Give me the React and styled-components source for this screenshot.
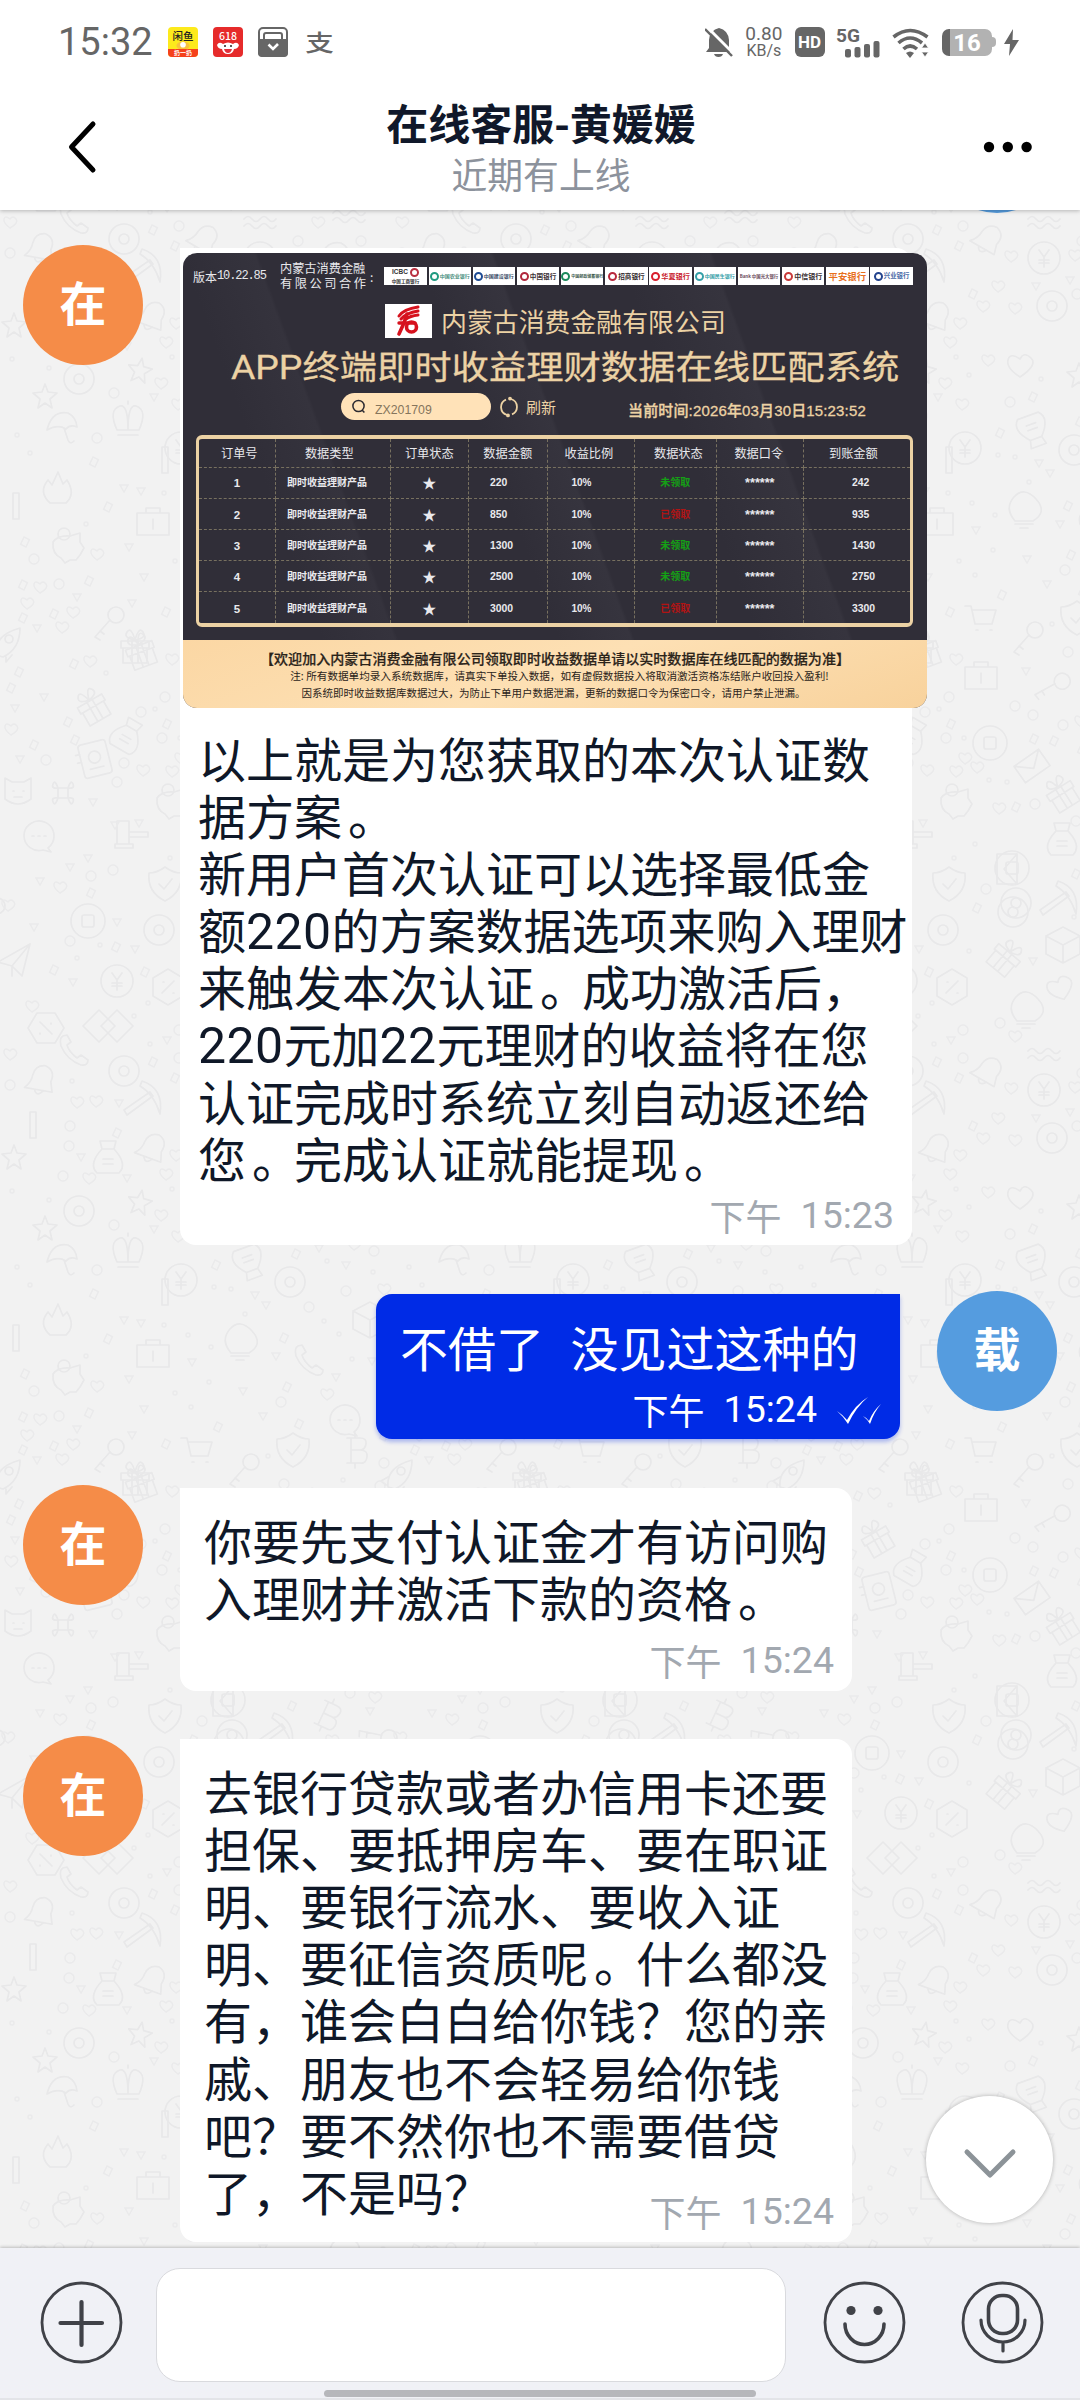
import React from "react";
import styled, { createGlobalStyle, css } from "styled-components";

const cjk = '"Noto Sans CJK SC", sans-serif';
const latinCjk = 'Roboto, "Noto Sans CJK SC", sans-serif';

const GlobalStyle = createGlobalStyle`
  * { box-sizing: border-box; }
  body { margin: 0; background: #fff; font-family: ${cjk}; text-spacing-trim: space-all; }
`;

const Screen = styled.div`
  width: 1080px;
  height: 2400px;
  display: flex;
  flex-direction: column;
  overflow: hidden;
  background: #fff;
`;

/* ---------- status bar ---------- */

const StatusBar = styled.div`
  height: 84px;
  flex: none;
  display: flex;
  align-items: center;
  justify-content: space-between;
  padding: 0 61px 0 58px;
  color: #666;
  font-family: ${latinCjk};
`;
const StatusGroup = styled.div`
  display: flex;
  align-items: center;
  gap: ${(p) => p.$gap || 0}px;
`;
const Clock = styled.div`
  font-size: 38px;
  line-height: 44px;
  width: 95px;
`;
const AppIcon = styled.div`
  width: 30px;
  height: 30px;
  border-radius: 4px;
  overflow: hidden;
  display: flex;
  flex-direction: column;
  align-items: center;
  background: ${(p) => p.$bg};
`;
const AppIconName = styled.div`
  font-family: ${cjk};
  font-weight: 500;
  font-size: 10.5px;
  line-height: 11px;
  margin-top: 3px;
  color: ${(p) => p.$color};
`;
const AppIconStrip = styled.div`
  margin-top: auto;
  width: 30px;
  height: 9px;
  background: #f5411c;
  color: #fff;
  font: 700 6px/8px ${cjk};
  text-align: center;
`;
const AlipayMark = styled.div`
  font: 500 27px/30px ${cjk};
  transform: scale(1.06, 0.84);
  margin-left: 3px;
`;
const NetSpeed = styled.div`
  width: 38px;
  text-align: center;
  display: flex;
  flex-direction: column;
  align-items: center;
`;
const SpeedValue = styled.div`
  font-size: 19px;
  line-height: 17px;
`;
const SpeedUnit = styled.div`
  font-size: 16px;
  line-height: 17px;
`;
const HdBadge = styled.div`
  width: 30px;
  height: 30px;
  border-radius: 6px;
  background: #666;
  color: #fff;
  font: 700 17px/31px Roboto, sans-serif;
  text-align: center;
`;
const Battery = styled.div`
  display: flex;
  align-items: center;
`;
const BatteryBody = styled.div`
  width: 50px;
  height: 27px;
  border-radius: 7px;
  background: linear-gradient(90deg, #666 8px, #b2b2b2 8px);
  color: #fff;
  font: 700 24px/28px Roboto, sans-serif;
  text-align: center;
`;
const BatteryCap = styled.div`
  width: 4px;
  height: 10px;
  border-radius: 0 4px 4px 0;
  background: #b2b2b2;
`;

/* ---------- header ---------- */

const Header = styled.header`
  height: 126px;
  flex: none;
  display: flex;
  justify-content: space-between;
  padding: 0 48px 0 62px;
  position: relative;
  z-index: 2;
  background: #fff;
  box-shadow: 0 1px 4px rgba(0, 0, 0, 0.25);
  clip-path: inset(0 0 -10px 0);
`;
const HeaderSide = styled.div`
  width: 120px;
  display: flex;
  padding-top: 34px;
  justify-content: ${(p) => (p.$end ? "flex-end" : "flex-start")};
`;
const HeaderText = styled.div`
  display: flex;
  flex-direction: column;
  align-items: center;
  margin-left: -12px;
`;
const Title = styled.div`
  font: 700 42px/52px ${cjk};
  color: #10182a;
  margin-top: 12px;
`;
const Subtitle = styled.div`
  font: 400 35.8px/44px ${cjk};
  color: #8c929c;
  margin-top: 3px;
`;

/* ---------- chat ---------- */

const Chat = styled.main`
  flex: 1;
  position: relative;
  overflow: hidden;
  background: #f2f2f2;
`;
const Wallpaper = styled.svg`
  position: absolute;
  left: 0;
  top: 0;
`;
const MessageList = styled.div`
  position: relative;
  display: flex;
  flex-direction: column;
  margin-top: -117px;
`;
const Row = styled.div`
  display: flex;
  align-items: flex-start;
  padding: 0 23px;
  margin-top: ${(p) => (p.$gap == null ? 46 : p.$gap)}px;
  justify-content: ${(p) => (p.$mine ? "flex-end" : "flex-start")};
  gap: 37px;
`;
const Avatar = styled.div`
  width: 120px;
  height: 120px;
  flex: none;
  border-radius: 50%;
  background: ${(p) => (p.$mine ? "#559cdf" : "#f58c48")};
  color: #fff;
  font: 700 47px/112px ${cjk};
  text-align: center;
`;
const Bubble = styled.div`
  display: flex;
  flex-direction: column;
  margin-top: 3px;
  width: ${(p) => p.$w}px;
  font-family: ${latinCjk};
  ${(p) =>
    p.$mine
      ? css`
          background: #002be6;
          color: #fff;
          border-radius: 16px 0 16px 16px;
          box-shadow: 0 3px 4px rgba(0, 43, 230, 0.3);
          padding: 28px 18px 9px 24px;
        `
      : css`
          background: #fff;
          color: #0f1828;
          border-radius: 0 16px 16px 16px;
          padding: ${p.$media ? "5px 18px 9px 18px" : "27px 18px 10px 24px"};
        `}
`;
const Lines = styled.div`
  display: flex;
  flex-direction: column;
  margin-top: ${(p) => p.$top || 0}px;
`;
const Line = styled.div`
  font-size: 48px;
  line-height: 57px;
  height: 57.1px;
  white-space: pre;
  word-spacing: 1.4px;
`;
const Digits = styled.span`
  font-size: 50px;
  line-height: 1;
  letter-spacing: 0.4px;
`;
const FullStop = styled.span`
  display: inline-block;
  width: 48px;
  height: 57px;
  text-indent: 6px;
  vertical-align: top;
`;
const Meta = styled.div`
  display: flex;
  align-items: center;
  justify-content: flex-end;
  gap: 19px;
  height: 42px;
  margin-top: ${(p) => p.$top}px;
  color: ${(p) => (p.$mine ? "#fff" : "#a2a8b0")};
`;
const Period = styled.span`
  font: 400 36px/42px ${cjk};
`;
const Time = styled.span`
  font: 400 37.5px/42px Roboto, sans-serif;
`;
const Ticks = styled.svg`
  margin-top: 5px;
`;

/* ---------- picture card ---------- */

const Card = styled.div`
  width: 744px;
  height: 455px;
  margin-left: -15px;
  border-radius: 14px;
  overflow: hidden;
  display: flex;
  flex-direction: column;
  background: linear-gradient(
    70deg,
    #302e38 0%,
    #302e38 18%,
    #35333d 26%,
    #302e38 26.4%,
    #302e38 44%,
    #36343e 52%,
    #302e38 52.4%,
    #302e38 66%,
    #36343e 76%,
    #302e38 76.4%
  );
`;
const PartnerBar = styled.div`
  height: 46px;
  display: flex;
  align-items: center;
  padding-left: 10px;
  color: #e8e8ec;
  font: 400 12px/15px ${cjk};
`;
const Version = styled.div`
  width: 87px;
  white-space: nowrap;
  display: flex;
  align-items: center;
`;
const VersionNumber = styled.span`
  font: 400 12px/15px "Liberation Mono", monospace;
  letter-spacing: -1.1px;
`;
const Partner = styled.div`
  width: 90px;
  display: flex;
  flex-direction: column;
  font-size: 12.2px;
  white-space: nowrap;
`;
const Spread = styled.div`
  display: flex;
  justify-content: space-between;
  width: 86px;
`;
const Banks = styled.div`
  display: flex;
  gap: 1.9px;
  margin-left: 11px;
`;
const Bank = styled.div`
  width: 42.3px;
  height: 18.5px;
  background: #fff;
  display: flex;
  align-items: center;
  justify-content: center;
  gap: 1px;
  white-space: nowrap;
  overflow: hidden;
  color: ${(p) => p.$color};
  font: 700 ${(p) => p.$size}px/8px ${cjk};
`;
const BankDot = styled.i`
  flex: none;
  width: 9px;
  height: 9px;
  border-radius: 50%;
  border: 2px solid ${(p) => p.$color};
`;
const BankStack = styled.div`
  display: flex;
  flex-direction: column;
  align-items: center;
`;
const BankTop = styled.div`
  display: flex;
  align-items: center;
  gap: 2px;
  font: 700 6.5px/8px "Liberation Sans", sans-serif;
`;

const Company = styled.div`
  display: flex;
  align-items: center;
  margin: 5px 0 0 202px;
  height: 34px;
  gap: 9px;
  color: #ecd2a4;
  font: 400 25.9px/34px ${cjk};
`;
const CompanyLogo = styled.div`
  width: 47px;
  height: 34px;
  background: #fff;
  display: flex;
  justify-content: center;
`;
const SystemName = styled.div`
  height: 40px;
  margin: 10px 0 0 48px;
  color: #ecd2a4;
  font: 400 33.2px/40px ${latinCjk};
  -webkit-text-stroke: 0.3px #ecd2a4;
  white-space: nowrap;
  transform: scaleX(1.124);
  transform-origin: left center;
`;
const Tools = styled.div`
  display: flex;
  align-items: center;
  height: 27px;
  margin: 5px 0 0 158px;
`;
const SearchPill = styled.div`
  display: flex;
  align-items: center;
  gap: 9px;
  width: 150px;
  height: 27px;
  padding-left: 10px;
  border-radius: 14px;
  background: #ffe2b8;
  color: #85755c;
`;
const SearchText = styled.span`
  font: 400 12.3px/20px "Liberation Sans", sans-serif;
  padding-top: 7px;
`;
const Refresh = styled.div`
  display: flex;
  align-items: center;
  gap: 7px;
  width: 129px;
  margin-left: 8px;
  color: #ecd2a4;
  font: 400 15px/27px ${cjk};
`;
const Now = styled.div`
  color: #ecd2a4;
  font: 500 15px/20px "Liberation Sans", ${cjk};
  margin-top: 8px;
  white-space: nowrap;
  letter-spacing: 0.15px;
  -webkit-text-stroke: 0.3px #ecd2a4;
`;
const Table = styled.div`
  flex: none;
  margin: 15px 0 0 13px;
  width: 717px;
  height: 192px;
  border: solid #ecd2a4;
  border-width: 4px 3px;
  border-radius: 6px;
  display: grid;
  grid-template-columns: 77px 114.6px 78.4px 79.5px 86.5px 81.7px 87.3px 1fr;
  grid-template-rows: 28.8px repeat(4, 31.1px) 1fr;
`;
const Cell = styled.div`
  display: flex;
  align-items: center;
  justify-content: ${(p) => (p.$left ? "flex-start" : "center")};
  padding-left: ${(p) => p.$left || 0}px;
  padding-right: ${(p) => p.$right || 0}px;
  padding-top: ${(p) => p.$drop || 0}px;
  border: 0 dashed #77705f;
  border-right-width: ${(p) => (p.$last ? 0 : 1)}px;
  border-bottom-width: ${(p) => (p.$end ? 0 : 1)}px;
  color: ${(p) => p.$color || "#e9e9ed"};
  font: ${(p) => (p.$head ? 400 : 700)} ${(p) => p.$size || 10}px/14px "Liberation Sans", ${cjk};
  white-space: nowrap;
`;
const CardFooter = styled.div`
  margin-top: 13px;
  flex: 1;
  display: flex;
  flex-direction: column;
  align-items: center;
  padding: 9px 0 0 0;
  background: linear-gradient(160deg, #fbd7a4, #fde0b4 50%, #f8d29c);
  color: #2b241a;
`;
const Welcome = styled.div`
  font: 500 14.06px/18px ${cjk};
  -webkit-text-stroke: 0.2px #2b241a;
  white-space: nowrap;
`;
const Note = styled.div`
  font: 400 ${(p) => p.$size}px/17.4px ${cjk};
  margin-left: ${(p) => p.$shift}px;
  white-space: nowrap;
`;

/* ---------- floating button and composer ---------- */

const ScrollDown = styled.button`
  position: absolute;
  right: 27px;
  bottom: 25px;
  width: 127px;
  height: 127px;
  border: 0;
  border-radius: 50%;
  background: #fff;
  box-shadow: 0 0 4px rgba(0, 0, 0, 0.28);
  display: flex;
  align-items: center;
  justify-content: center;
  padding: 8px 0 0;
`;
const Composer = styled.footer`
  flex: none;
  height: 152px;
  background: #f0f1f6;
  border-bottom: 2px solid #e3e4e8;
  box-shadow: 0 -1px 3px rgba(0, 0, 0, 0.22);
  position: relative;
  display: flex;
  flex-direction: column;
`;
const ComposerRow = styled.div`
  display: flex;
  padding: 20px 36px 0 40px;
`;
const RoundIcon = styled.svg`
  flex: none;
  width: 83px;
  height: 83px;
  margin-top: 13px;
  margin-left: ${(p) => p.$ml || 0}px;
  fill: none;
  stroke: #404248;
  stroke-linecap: round;
`;
const Field = styled.div`
  width: 630px;
  height: 114px;
  margin-left: 33px;
  border: 1px solid #d9dade;
  border-radius: 24px;
  background: #fff;
`;
const HomeBar = styled.div`
  width: 432px;
  height: 7px;
  border-radius: 4px;
  background: #b6b7bb;
  align-self: center;
  margin-top: 8px;
`;

/* ---------- wallpaper drawings ---------- */

const shapes = {
  coin: <><circle r="15" /><circle r="5" /></>,
  square: <><circle r="17" /><rect x="-6" y="-6" width="12" height="12" rx="2" /></>,
  yen: <><circle r="16" /><path d="M-5-8 0-1 5-8M0-1V9M-5 2H5M-5 5H5" /></>,
  btc: <path d="M-9-12H4q7 0 6 6q-1 6-6 6H-5M4 0q8 0 7 7t-7 6H-9M-5-12V13M-1-17V-12M-1 13V18" />,
  gift: <path d="M-14-7H14V0H-14ZM-12 0V15H12V0M-3-7V15M3-7V15M0-8Q-12-10-8-16T0-8Q12-10 8-16T0-8" />,
  chat: <><path d="M-15 0a15 15 0 1 1 24 12l3 4-8-2A15 15 0 0 1-15 0Z" /><path d="M-7 0h2M-1 0h2M5 0h2" /></>,
  photo: <><rect x="-14" y="-17" width="28" height="34" rx="3" /><circle cy="-2" r="6" /><path d="M-14-8h-4M-14 0h-4M-7 9H7" /></>,
  shield: <path d="M0-17Q8-11 16-11Q18 8 0 17Q-18 8-16-11Q-8-11 0-17ZM-6 0-1 5 7-5" />,
  bag: <><path d="M-6-9Q-20 6-11 15H11Q20 6 6-9ZM-6-9-8-17H8L6-9" /><path d="M-5 1H5M-5 6H5" /></>,
  gavel: <path d="M-13-14H-1V9H-13ZM-15 9H3V13H-15ZM-1-3H18V2H-1" />,
  pick: <path d="M-20 14 6-4l3 4L-17 19ZM-2-15Q20-8 16 18Q10-2-4-10Z" />,
  cube: <path d="M0-18 17-9V9L0 18-17 9V-9ZM-17-9 0 0 17-9M0 0V18" />,
  mail: <path d="M-15-10H15V10H-15ZM-15-10 0 3 15-10" />,
  heart: <path d="M0 12Q-14 3-12-5T0-6Q4-14 11-7T0 12Z" />,
  diamonds: <path d="M-9-16 7 0-9 16-25 0ZM9-16 25 0 9 16-7 0Z" />,
  bell: <path d="M-14 10Q-8 4-8-4Q-7-14 3-15Q14-12 11 0L14 10ZM-4 10Q0 18 5 10" />,
  bulb: <path d="M-9 13Q-20 0-10-11T12-9T9 13ZM-9 16H9M-4 20H4" />,
  wave: <path d="M-17-3q4-5 8 0t8 0 8 0 8 0M-17 4q4-5 8 0t8 0 8 0 8 0" />,
  hex: <path d="M0-18 15-9V9L0 18-15 9V-9ZM-6 6 6-6M-5-5h1M5 6h1" />,
  pig: <><path d="M-15-4Q-10-11 2-10L12-13V-4L16 2 12 9 8 14H2L-3 17-7 12Q-16 8-15-4Z" /><circle cx="-4" cy="-12" r="6" /></>,
  star: <path d="M0-12 3-4 12-3 5 3 7 12 0 7-7 12-5 3-12-3-3-4Z" />,
  plane: <path d="M-16 2 16-16 8 16-2 6ZM-2 6 16-16M-2 6V16" />,
  phone: <path d="M-12-14Q-16-12-14-4Q-8 10 6 15Q13 16 13 10L6 5 2 8Q-6 2-8-5L-4-8-8-15Z" />,
  crown: <path d="M-11 12Q-20-8-8-12Q0-14 0 12Q0-14 8-12Q20-8 11 12ZM-10 17H10M0-14V-17" />,
  umbrella: <path d="M-15 4Q-10-16 6-13Q14-9 15 1Q8-2 4 3Q-4-2-15 4ZM2 2 6 14q2 5 6 1" />,
  rocket: <><path d="M-10 12Q-12-8 14-15Q14 6-3 14ZM-10 2-17 6-12 10M0 14 0 19 6 12" /><circle cx="3" cy="-4" r="4" /></>,
  key: <><circle cx="8" cy="-8" r="8" /><path d="M2-3-13 14M-13 14-8 17M-8 8-4 11" /></>,
  cart: <path d="M-17-12H-11L-7 6H10L14-8H-10M-6 12h2M8 12h2" />,
  fire: <path d="M-8 15Q-20 4-10-8L-6-3 0-16 5-4 9-8Q18 6 8 15Z" />,
  box: <path d="M-16-8H16V14H-16ZM-7-8V-13H7V-8M0-2V8" />,
  bar: <rect x="-3" y="-13" width="6" height="26" />,
  cat: <path d="M-13-13-6-9H6L13-13V8Q0 18-13 8ZM-5 0h1M5 0h1M-4 6H4" />,
  cmd: <path d="M-5-5H5V5H-5ZM-5-5Q-12-4-10-9T-5-5M5-5Q12-4 10-9T5-5M5 5Q12 4 10 9T5 5M-5 5Q-12 4-10 9T-5 5" />,
};

const TILE_W = 392;
const TILE_H = 832;
const doodles = [
  ["gift", 925, 1484, -20], ["box", 981, 1507, 0], ["key", 1052, 1518, 20], ["gift", 877, 1539, -30],
  ["bag", 911, 1568, 30], ["photo", 879, 1591, -14], ["square", 990, 1575, 0], ["mail", 1032, 1598, -35],
  ["gift", 1062, 1626, -32], ["pig", 956, 1634, 0], ["gavel", 914, 1667, 0], ["bag", 1062, 1672, 0],
  ["mail", 1007, 1701, 90], ["shield", 949, 1716, 0], ["pick", 1060, 1728, 0], ["coin", 1013, 1744, 0],
  ["square", 872, 1753, 0], ["coin", 943, 1762, 0], ["cube", 1063, 1777, 0], ["gift", 1005, 1790, 40],
  ["yen", 901, 1813, 0], ["hex", 952, 1819, 0], ["heart", 1060, 1820, -20], ["diamonds", 892, 1858, 0],
  ["bulb", 1026, 1840, 0], ["wave", 1045, 1886, 0], ["coin", 908, 1903, 0], ["bell", 987, 1903, 30],
  ["pick", 928, 1928, 0], ["yen", 1044, 1922, 0], ["coin", 1052, 1970, 0], ["bell", 935, 1980, 20],
  ["cat", 18, 791, 0], ["cmd", 63, 793, 0], ["chat", 39, 836, 0], ["plane", 14, 960, 0],
  ["hex", 46, 1028, 90], ["phone", 75, 1050, 0], ["bell", 40, 1080, 10], ["bar", 33, 1125, 0],
  ["bag", 108, 1158, 0], ["star", 14, 1157, 0], ["star", 140, 1202, 10], ["coin", 79, 1211, 0],
  ["star", 45, 1228, 0], ["crown", 128, 1250, 0], ["umbrella", 62, 1258, 0], ["yen", 573, 1280, 0],
  ["fire", 58, 1320, 0], ["bag", 641, 1262, 160], ["coin", 682, 1282, 0], ["pig", 68, 1378, 0],
  ["box", 153, 1353, 0], ["bar", 165, 1292, 0], ["bar", 16, 1338, 0], ["key", 500, 1455, 0],
  ["cart", 590, 1450, 0], ["shield", 685, 1450, 0], ["btc", 748, 1450, 0], ["rocket", 398, 1475, 0],
  ["gift", 527, 1480, 0], ["key", 635, 1470, 0], ["star", 295, 1207, 0], ["heart", 236, 1197, 0],
  ["square", 228, 1700, 0], ["btc", 328, 1715, 25], ["key", 378, 1735, 60], ["coin", 232, 1735, 0],
  ["phone", 310, 1360, 0], ["chat", 345, 1420, 0], ["bulb", 240, 1340, 0], ["plane", 350, 1560, 0],
  ["crown", 340, 1620, 0], ["star", 320, 1780, 0], ["photo", 345, 1840, 12], ["umbrella", 335, 1920, 0],
  ["rocket", 340, 1980, 20], ["heart", 370, 1660, 0], ["wave", 350, 1880, 0], ["cube", 370, 1320, 0],
];

const mod = (n, m) => ((n % m) + m) % m;

const buildSpecks = (count) => {
  let seed = 20917;
  const next = () => {
    seed = (seed * 16807) % 2147483647;
    return seed / 2147483647;
  };
  const placed = doodles.map(([, x, y]) => ({ x: mod(x, TILE_W), y: mod(y, TILE_H), r: 25 }));
  const result = [];
  for (let i = 0; i < 6000 && result.length < count; i += 1) {
    const x = 7 + next() * (TILE_W - 14);
    const y = 7 + next() * (TILE_H - 14);
    if (placed.every((p) => Math.hypot(p.x - x, p.y - y) > p.r)) {
      placed.push({ x, y, r: 15 });
      result.push({ x: Math.round(x), y: Math.round(y), k: result.length % 5 });
    }
  }
  return result;
};
const specks = buildSpecks(230);

const Speck = ({ x, y, k }) => {
  const t = `translate(${x} ${y})`;
  if (k === 0) return <circle transform={t} r="5" />;
  if (k === 1) return <rect transform={`${t} rotate(25)`} x="-3" y="-4" width="6" height="8" />;
  if (k === 2) return <path transform={t} d="M-4-3H4L0 4Z" />;
  if (k === 3) return <circle transform={t} r="2" />;
  return <path transform={t} d="M0 6Q-7 1-6-3T0-3Q3-7 6-3T0 6Z" />;
};

const WallpaperPattern = () => (
  <Wallpaper width="1080" height="2040">
    <defs>
      <pattern id="doodle" width={TILE_W} height={TILE_H} patternUnits="userSpaceOnUse" patternTransform="translate(0 -210)">
        <g fill="none" stroke="#e8e8e9" strokeWidth="1.7" strokeLinejoin="round" strokeLinecap="round">
          {doodles.flatMap(([name, px, py, rot], i) => {
            const x = mod(px, TILE_W);
            const y = mod(py, TILE_H);
            const xs = x < 26 ? [x, x + TILE_W] : x > TILE_W - 26 ? [x, x - TILE_W] : [x];
            const ys = y < 26 ? [y, y + TILE_H] : y > TILE_H - 26 ? [y, y - TILE_H] : [y];
            return xs.flatMap((ax) =>
              ys.map((ay) => (
                <g key={`${i}-${ax}-${ay}`} transform={`translate(${ax} ${ay}) rotate(${rot})`}>
                  {shapes[name]}
                </g>
              ))
            );
          })}
        </g>
        <g fill="none" stroke="#eaeaeb" strokeWidth="1.5">
          {specks.map((s, i) => <Speck key={i} {...s} />)}
        </g>
      </pattern>
    </defs>
    <rect width="1080" height="2040" fill="url(#doodle)" />
  </Wallpaper>
);

/* ---------- data ---------- */

const banks = [
  { name: "中国农业银行", color: "#4a8f80", dot: "#1f9a80", size: 5 },
  { name: "中国建设银行", color: "#3a4a66", dot: "#1d4b94", size: 5 },
  { name: "中国银行", color: "#3a3034", dot: "#b0283c", size: 6.6 },
  { name: "中国邮政储蓄银行", color: "#3c5c50", dot: "#1c8a5c", size: 4 },
  { name: "招商银行", color: "#33282c", dot: "#b8283c", size: 6.6 },
  { name: "华夏银行", color: "#c8202c", dot: "#d81e2c", size: 7.2 },
  { name: "中国民生银行", color: "#35a0a8", dot: "#35a0a8", size: 5 },
  { name: "中国光大银行", color: "#6a4a5c", bank: true, size: 4.4 },
  { name: "中信银行", color: "#3a3034", dot: "#c83a3a", size: 7 },
  { name: "平安银行", color: "#e8701e", size: 9.4 },
  { name: "兴业银行", color: "#4a6aa8", dot: "#24448e", size: 6.4 },
];

const heads = [
  { label: "订单号", left: 22 },
  { label: "数据类型", right: 7 },
  { label: "订单状态" },
  { label: "数据金额", right: 1 },
  { label: "收益比例", left: 16 },
  { label: "数据状态", left: 19 },
  { label: "数据口令", right: 2 },
  { label: "到账金额", left: 25 },
];
const orders = [
  ["1", "220", "未领取", "242"],
  ["2", "850", "已领取", "935"],
  ["3", "1300", "未领取", "1430"],
  ["4", "2500", "未领取", "2750"],
  ["5", "3000", "已领取", "3300"],
];

const OrderRow = ({ order, index, end }) => {
  const [id, amount, state, total] = order;
  const common = { $end: end, $drop: index === 0 ? 0 : 2 };
  return (
    <>
      <Cell {...common} $size={11.5}>{id}</Cell>
      <Cell {...common} $left={11}>即时收益理财产品</Cell>
      <Cell {...common} $size={14}>★</Cell>
      <Cell {...common} $left={21} $size={10.4}>{amount}</Cell>
      <Cell {...common} $left={23}>10%</Cell>
      <Cell {...common} $color={state === "未领取" ? "#15a015" : "#b01414"}>{state}</Cell>
      <Cell {...common} $size={12.6}>******</Cell>
      <Cell {...common} $last $left={48} $size={10.4}>{total}</Cell>
    </>
  );
};

const PictureCard = () => (
  <Card>
    <PartnerBar>
      <Version>版本<VersionNumber>10.22.85</VersionNumber></Version>
      <Partner>
        <div>内蒙古消费金融</div>
        <Spread>{"有限公司合作".split("").map((c) => <span key={c}>{c}</span>)}</Spread>
      </Partner>
      :
      <Banks>
        <Bank $color="#333" $size={4.6}>
          <BankStack>
            <BankTop>ICBC <BankDot $color="#b83040" /></BankTop>
            中国工商银行
          </BankStack>
        </Bank>
        {banks.map((b) => (
          <Bank key={b.name} $color={b.color} $size={b.size}>
            {b.dot && <BankDot $color={b.dot} />}
            {b.bank && <span>Bank</span>}
            {b.name}
          </Bank>
        ))}
      </Banks>
    </PartnerBar>
    <Company>
      <CompanyLogo>
        <svg width="26" height="34" viewBox="0 0 26 34" fill="none" stroke="#d6121e" strokeLinecap="round">
          <path d="M3 12Q8 5 22 3M5 15Q10 9 22 7M10 15Q14 12 22 11" strokeWidth="3" />
          <path d="M11 10Q8 20 3 30" strokeWidth="3.6" />
          <path d="M3 19H19" strokeWidth="3.4" />
          <circle cx="15.5" cy="23" r="5" strokeWidth="3.6" />
        </svg>
      </CompanyLogo>
      内蒙古消费金融有限公司
    </Company>
    <SystemName>APP终端即时收益理财数据在线匹配系统</SystemName>
    <Tools>
      <SearchPill>
        <svg width="15" height="15" viewBox="0 0 15 15" fill="none" stroke="#2c2a30" strokeWidth="1.5">
          <circle cx="7.5" cy="7" r="5.6" /><path d="M11 11l2.4 2.6" />
        </svg>
        <SearchText>ZX201709</SearchText>
      </SearchPill>
      <Refresh>
        <svg width="20" height="22" viewBox="0 0 20 22" fill="none" stroke="#ecd2a4" strokeWidth="1.8">
          <path d="M12 3a8.2 8.2 0 0 1 1 15.4M8 19a8.2 8.2 0 0 1-1-15.4" />
          <circle cx="11" cy="2.6" r="1" /><circle cx="9" cy="19.4" r="1" />
        </svg>
        刷新
      </Refresh>
      <Now>当前时间:2026年03月30日15:23:52</Now>
    </Tools>
    <Table>
      {heads.map((h, i) => (
        <Cell key={h.label} $head $drop={2} $size={12.2} $last={i === heads.length - 1}
          $left={h.left} $right={h.right}>
          {h.label}
        </Cell>
      ))}
      {orders.map((o, i) => <OrderRow key={o[0]} order={o} index={i} end={i === orders.length - 1} />)}
    </Table>
    <CardFooter>
      <Welcome>【欢迎加入内蒙古消费金融有限公司领取即时收益数据单请以实时数据库在线匹配的数据为准】</Welcome>
      <Note $size={10.6} $shift={9}>注: 所有数据单均录入系统数据库，请真实下单投入数据，如有虚假数据投入将取消激活资格冻结账户收回投入盈利!</Note>
      <Note $size={10.5} $shift={-3}>因系统即时收益数据库数据过大，为防止下单用户数据泄漏，更新的数据口令为保密口令，请用户禁止泄漏。</Note>
    </CardFooter>
  </Card>
);

const renderPart = (part, key) => {
  if (/\d/.test(part)) return <Digits key={key}>{part}</Digits>;
  if (part === "。") return <FullStop key={key}>{part}</FullStop>;
  return part;
};

const MessageText = ({ lines, top }) => (
  <Lines $top={top}>
    {lines.map((l, i) => (
      <Line key={i}>{l.split(/(\d+|。)/).map(renderPart)}</Line>
    ))}
  </Lines>
);

const Stamp = ({ time, top, mine }) => (
  <Meta $top={top} $mine={mine}>
    <Period>下午</Period>
    <Time>{time}</Time>
    {mine && (
      <Ticks width="46" height="28" viewBox="0 0 46 28" fill="#fff">
        <path d="M1 14q6 4 10 9Q19 8 32 0Q20 10 12 27Q7 19 1 14ZM27 19q4 2 6 5Q37 14 45 7Q38 15 34 27Q31 22 27 19Z" />
      </Ticks>
    )}
  </Meta>
);

export default function App() {
  return (
    <Screen>
      <GlobalStyle />
      <StatusBar>
        <StatusGroup $gap={15}>
          <Clock>15:32</Clock>
          <AppIcon $bg="#fdea1c">
            <AppIconName $color="#222">闲鱼</AppIconName>
            <svg width="16" height="8" viewBox="0 0 16 8"><ellipse cx="8" cy="5" rx="7" ry="4.4" fill="#f7c33c" /><circle cx="8" cy="4" r="3" fill="#fff" /></svg>
            <AppIconStrip>扔一扔</AppIconStrip>
          </AppIcon>
          <AppIcon $bg="#e62b2b">
            <AppIconName $color="#fff">618</AppIconName>
            <svg width="24" height="16" viewBox="0 0 24 16">
              <path d="M1 4Q3 0 7 3Q12 0 17 3Q21 0 23 4Q22 8 18 8Q17 13 12 13T6 8Q2 8 1 4Z" fill="#fff" />
              <path d="M8 8H16Q15 12 12 12T8 8Z" fill="#e0303c" />
              <circle cx="9" cy="5" r="1" fill="#222" /><circle cx="15" cy="5" r="1" fill="#222" />
            </svg>
          </AppIcon>
          <svg width="30" height="30" viewBox="0 0 30 30">
            <rect x="1" y="1" width="28" height="28" rx="4" fill="none" stroke="#666" strokeWidth="2" />
            <path d="M6 13V8Q6 6 8 6H22Q24 6 24 8V13" fill="none" stroke="#666" strokeWidth="2" />
            <path d="M0 12H30V26Q30 30 26 30H4Q0 30 0 26Z" fill="#666" />
            <path d="M10.5 17.5l4.5 4.5 5-5" fill="none" stroke="#fff" strokeWidth="2.6" />
          </svg>
          <AlipayMark>支</AlipayMark>
        </StatusGroup>
        <StatusGroup $gap={11.8}>
          <svg width="28" height="31" viewBox="0 0 28 31">
            <path d="M4 21V13Q5 3 14 1Q23 3 24 13V21L27 25H1ZM9 27H18Q17 30 13.5 30T9 27Z" fill="#666" />
            <path d="M2 0 29 27" stroke="#fff" strokeWidth="3" />
            <path d="M0 2 27 29" stroke="#666" strokeWidth="2.4" />
          </svg>
          <NetSpeed>
            <SpeedValue>0.80</SpeedValue>
            <SpeedUnit>KB/s</SpeedUnit>
          </NetSpeed>
          <HdBadge>HD</HdBadge>
          <svg width="44" height="31" viewBox="0 0 44 31" fill="#666" overflow="visible">
            <text x="0" y="15" fontFamily="Roboto" fontWeight="700" fontSize="19" textLength="24" lengthAdjust="spacingAndGlyphs">5G</text>
            <rect x="9" y="22" width="6" height="8.5" rx="2" /><rect x="18.5" y="20" width="6" height="10.5" rx="2" />
            <rect x="28" y="17" width="6" height="13.5" rx="2" /><rect x="37.5" y="14" width="6" height="16.5" rx="2" />
          </svg>
          <svg width="38" height="31" viewBox="0 0 38 31" fill="none" stroke="#666" strokeWidth="3.6">
            <path d="M1.5 10Q18 -3 35.5 10M6.5 16Q18 6 30 16M11.5 22Q18 16 25 22" />
            <path d="M14 26Q18 23 22 26L18 31Z" fill="#666" stroke="none" />
            <path d="M33 16l3.5 5h-7ZM33 30l3.5-5h-7Z" fill="#666" stroke="#fff" strokeWidth="0.8" />
          </svg>
          <StatusGroup $gap={8}>
            <Battery>
              <BatteryBody>16</BatteryBody>
              <BatteryCap />
            </Battery>
            <svg width="15" height="27" viewBox="0 0 15 27" fill="#666"><path d="M9 0 0 15H6L5 27 15 11H8.5Z" /></svg>
          </StatusGroup>
        </StatusGroup>
      </StatusBar>

      <Header>
        <HeaderSide>
          <svg width="40" height="58" viewBox="0 0 40 58" fill="none" stroke="#000" strokeWidth="5" strokeLinecap="round" strokeLinejoin="round">
            <path d="M31 6 9.5 29 31 52" />
          </svg>
        </HeaderSide>
        <HeaderText>
          <Title>在线客服-黄媛媛</Title>
          <Subtitle>近期有上线</Subtitle>
        </HeaderText>
        <HeaderSide $end>
          <svg width="50" height="58" viewBox="0 0 50 58">
            <circle cx="7" cy="29" r="5.2" /><circle cx="25.8" cy="29" r="5.2" /><circle cx="44.6" cy="29" r="5.2" />
          </svg>
        </HeaderSide>
      </Header>

      <Chat>
        <WallpaperPattern />
        <MessageList>
          <Row $mine $gap={0}>
            <Avatar $mine />
          </Row>
          <Row $gap={32}>
            <Avatar>在</Avatar>
            <Bubble $w={732} $media>
              <PictureCard />
              <MessageText
                top={25}
                lines={[
                  "以上就是为您获取的本次认证数",
                  "据方案。",
                  "新用户首次认证可以选择最低金",
                  "额220的方案数据选项来购入理财",
                  "来触发本次认证。成功激活后，",
                  "220元加22元理财的收益将在您",
                  "认证完成时系统立刻自动返还给",
                  "您。完成认证就能提现。",
                ]}
              />
              <Stamp time="15:23" top={4} />
            </Bubble>
          </Row>
          <Row $mine>
            <Bubble $mine $w={524}>
              <MessageText lines={["不借了  没见过这种的"]} />
              <Stamp mine time="15:24" top={9} />
            </Bubble>
            <Avatar $mine>载</Avatar>
          </Row>
          <Row>
            <Avatar>在</Avatar>
            <Bubble $w={672}>
              <MessageText lines={["你要先支付认证金才有访问购", "入理财并激活下款的资格。"]} />
              <Stamp time="15:24" top={10} />
            </Bubble>
          </Row>
          <Row $gap={45}>
            <Avatar>在</Avatar>
            <Bubble $w={672}>
              <MessageText
                lines={[
                  "去银行贷款或者办信用卡还要",
                  "担保、要抵押房车、要在职证",
                  "明、要银行流水、要收入证",
                  "明、要征信资质呢。什么都没",
                  "有，谁会白白给你钱？您的亲",
                  "戚、朋友也不会轻易给你钱",
                  "吧？要不然你也不需要借贷",
                  "了，不是吗？",
                ]}
              />
              <Stamp time="15:24" top={-33} />
            </Bubble>
          </Row>
        </MessageList>
        <ScrollDown aria-label="scroll down">
          <svg width="56" height="34" viewBox="0 0 56 34" fill="none" stroke="#8c9398" strokeWidth="5" strokeLinecap="round" strokeLinejoin="round">
            <path d="M5 5 28 28 51 5" />
          </svg>
        </ScrollDown>
      </Chat>

      <Composer>
        <ComposerRow>
          <RoundIcon viewBox="0 0 83 83">
            <circle cx="41.5" cy="41.5" r="39.5" strokeWidth="2.8" />
            <path d="M20.5 42H62M41.5 21V64" strokeWidth="4.2" />
          </RoundIcon>
          <Field />
          <RoundIcon viewBox="0 0 83 83" $ml={37}>
            <circle cx="41.5" cy="41.5" r="39.5" strokeWidth="2.8" />
            <circle cx="28" cy="29.5" r="4.6" fill="#404248" stroke="none" />
            <circle cx="55" cy="29.5" r="4.6" fill="#404248" stroke="none" />
            <path d="M22 43a19.5 20.5 0 0 0 39 0" strokeWidth="3.6" />
          </RoundIcon>
          <RoundIcon viewBox="0 0 83 83" $ml={55}>
            <circle cx="41.5" cy="41.5" r="39.5" strokeWidth="2.8" />
            <rect x="27.5" y="14.5" width="29" height="38" rx="13.5" strokeWidth="3.6" />
            <path d="M20 39a22 22 0 0 0 44 0M42 62V70" strokeWidth="3.2" />
          </RoundIcon>
        </ComposerRow>
        <HomeBar />
      </Composer>
    </Screen>
  );
}
